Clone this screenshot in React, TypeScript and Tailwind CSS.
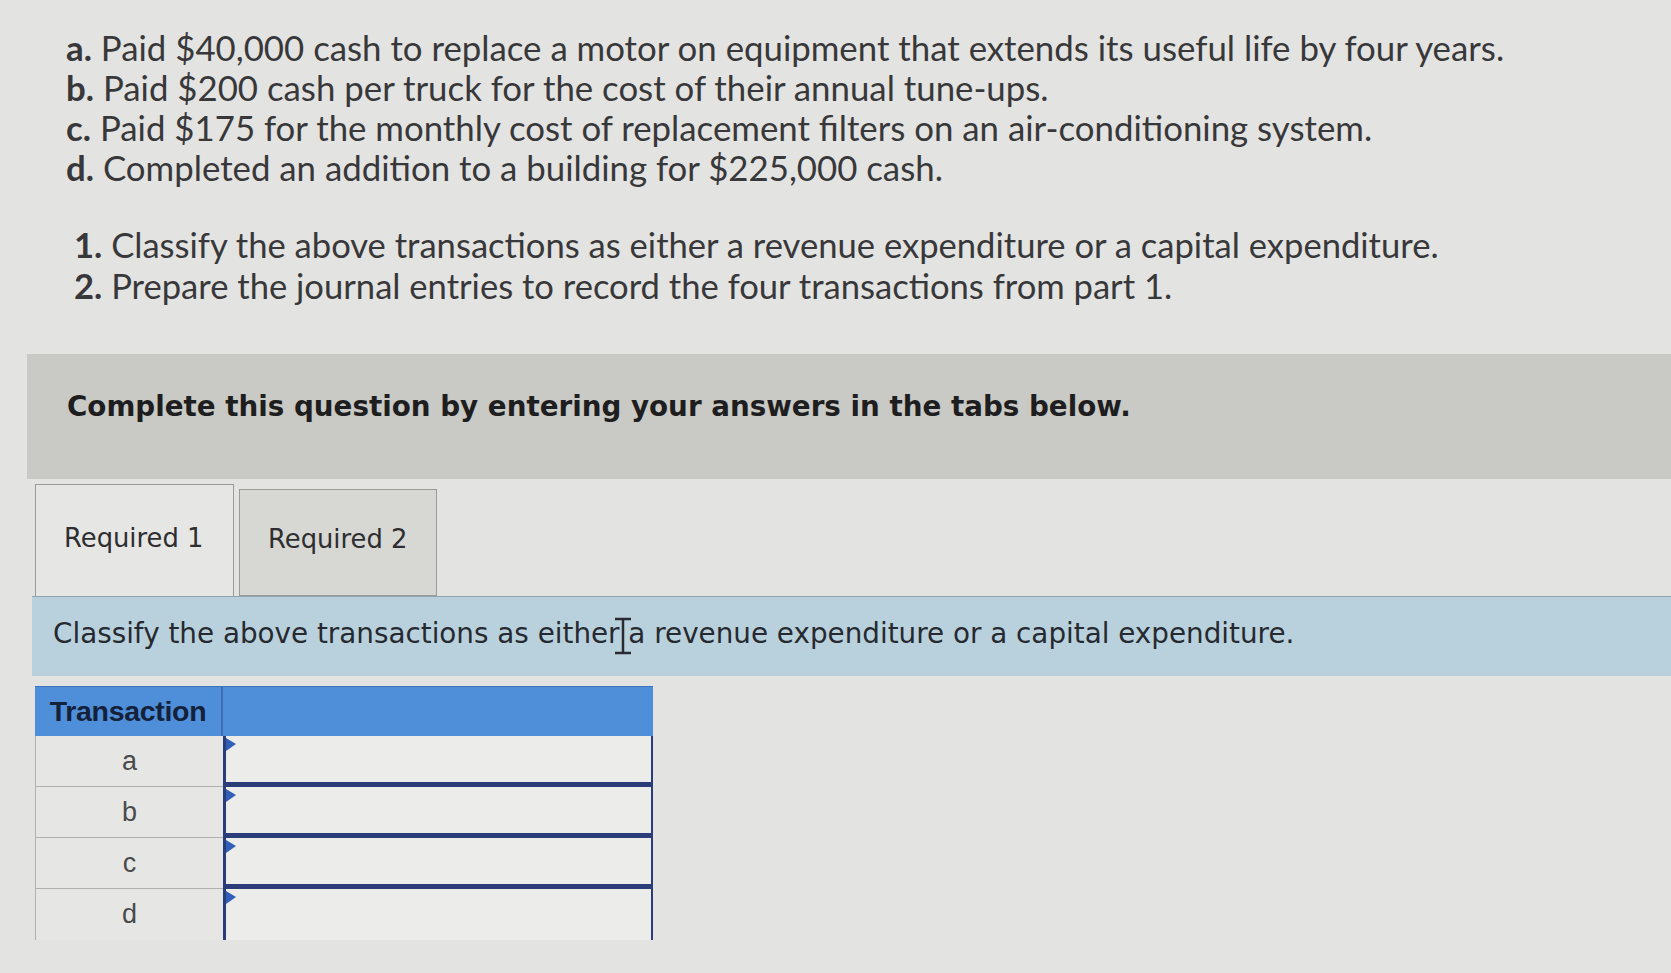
import React from "react";

const items = [
  ["a.", "Paid $40,000 cash to replace a motor on equipment that extends its useful life by four years."],
  ["b.", "Paid $200 cash per truck for the cost of their annual tune-ups."],
  ["c.", "Paid $175 for the monthly cost of replacement filters on an air-conditioning system."],
  ["d.", "Completed an addition to a building for $225,000 cash."],
];

const tasks = [
  ["1.", "Classify the above transactions as either a revenue expenditure or a capital expenditure."],
  ["2.", "Prepare the journal entries to record the four transactions from part 1."],
];

function Flag() {
  return (
    <svg className="absolute left-0 top-[2px]" width="10" height="14" viewBox="0 0 10 14">
      <path d="M0 0 L10 6 L0 13 Z" fill="#2f5fb8" />
    </svg>
  );
}

export default function App() {
  return (
    <div className="relative w-[1671px] h-[973px] overflow-hidden bg-[#e3e3e1] text-[#3a3a3c]">
      {/* problem text */}
      <div className="pl-[66px] pt-[28px] text-[34.8px] leading-[40px] font-['Lato',sans-serif] text-[#38383a]">
        {items.map(([k, t]) => (
          <div key={k} className="whitespace-nowrap">
            <span className="font-bold">{k}</span> {t}
          </div>
        ))}
      </div>
      <div className="pl-[74px] pt-[36px] text-[34.6px] leading-[41px] font-['Lato',sans-serif] text-[#38383a]">
        {tasks.map(([k, t]) => (
          <div key={k} className="whitespace-nowrap">
            <span className="font-bold">{k}</span> {t}
          </div>
        ))}
      </div>

      {/* banner */}
      <div className="ml-[27px] mt-[48px] h-[125px] bg-[#c9c9c5] pl-[40px] pt-[35px]">
        <div className="font-['DejaVu_Sans',sans-serif] font-bold text-[27.75px] leading-[36px] text-[#1e1e20] whitespace-nowrap">
          Complete this question by entering your answers in the tabs below.
        </div>
      </div>

      {/* tabs */}
      <div className="ml-[35px] mt-[5px] flex items-end gap-[5px] h-[112px]">
        <div className="w-[199px] h-[112px] border border-b-0 border-[#9a9a98] bg-[#e6e6e4] pl-[28px] pt-[34px] font-['DejaVu_Sans',sans-serif] text-[25.8px] text-[#2e2e30]">
          Required 1
        </div>
        <div className="w-[198px] h-[107px] border border-[#9a9a98] bg-[#d7d7d4] pl-[28px] pt-[30px] font-['DejaVu_Sans',sans-serif] text-[25.8px] text-[#2e2e30]">
          Required 2
        </div>
      </div>

      {/* blue bar */}
      <div className="ml-[32px] h-[80px] bg-[#b9d1dc] border-t border-[#8ea4ae] pl-[21px] pt-[20px]">
        <div className="font-['DejaVu_Sans',sans-serif] text-[27.8px] leading-[34px] text-[#262a30] whitespace-nowrap">
          Classify the above transactions as either a revenue expenditure or a capital expenditure.
        </div>
      </div>

      {/* table */}
      <div className="ml-[35px] mt-[10px] w-[618px]">
        <div className="flex h-[50px] bg-[#4f8ed8] border-t border-[#3e74b8]">
          <div className="w-[188px] border-r-2 border-[#3c6eb0] flex items-center justify-center font-['Liberation_Sans',sans-serif] font-bold text-[28.5px] text-[#13213a] tracking-[-0.3px]">
            Transaction
          </div>
          <div className="flex-1" />
        </div>
        {["a", "b", "c", "d"].map((l, i) => (
          <div key={l} className="flex h-[51px]">
            <div
              className={
                "w-[188px] flex items-center justify-center bg-[#e6e6e4] border-l border-[#b0b0ae] font-['Liberation_Sans',sans-serif] text-[27px] text-[#4a4a4c] " +
                (i < 3 ? "border-b border-[#8e8e8c]" : "")
              }
            >
              {l}
            </div>
            <div
              className={
                "relative flex-1 bg-[#ececea] border-l-[3px] border-r-2 border-[#2a3d78] " +
                (i < 3 ? "border-b-[5px]" : "border-b-0")
              }
            >
              <Flag />
            </div>
          </div>
        ))}
      </div>

      {/* text cursor */}
      <svg className="absolute left-[612px] top-[617px]" width="22" height="38" viewBox="0 0 22 38">
        <path d="M3 2 H19 M11 2 V36 M3 36 H19" stroke="#2a2a30" strokeWidth="2.5" fill="none" />
      </svg>
    </div>
  );
}
